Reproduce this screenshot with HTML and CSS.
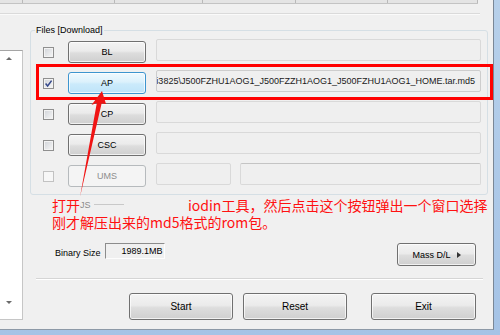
FILE: index.html
```html
<!DOCTYPE html>
<html lang="zh-CN">
<head>
    <meta charset="UTF-8">
    <meta name="viewport" content="width=device-width, initial-scale=1.0">
    <title>Odin3</title>
    <link rel="stylesheet" href="styles.css">
</head>
<body>
    <div class="window">
        <div class="ports">
            <span class="port"></span>
            <span class="port"></span>
            <span class="port"></span>
            <span class="port"></span>
            <span class="port"></span>
            <span class="port"></span>
        </div>
        <div class="rule"></div>

        <div class="main">
            <div class="log">
                <span class="scroll-up"></span>
                <span class="scroll-down"></span>
            </div>

            <div class="content">
                <div class="group">
                    <div class="group-label">Files [Download]</div>
                    <div class="rows">
                        <div class="row">
                            <span class="check"></span>
                            <button class="btn">BL</button>
                            <div class="field"></div>
                        </div>
                        <div class="row">
                            <span class="check">
                                <svg width="9" height="9" viewBox="0 0 9 9"><path d="M1.6 4.6 L3.6 7 L7.6 1.6" fill="none" stroke="#34478a" stroke-width="1.5"/></svg>
                            </span>
                            <button class="btn hot">AP</button>
                            <div class="field path"><span>D:\ROM\J500F_0806_i3825\J500FZHU1AOG1_J500FZZH1AOG1_J500FZHU1AOG1_HOME.tar.md5</span></div>
                        </div>
                        <div class="row">
                            <span class="check"></span>
                            <button class="btn">CP</button>
                            <div class="field"></div>
                        </div>
                        <div class="row">
                            <span class="check"></span>
                            <button class="btn">CSC</button>
                            <div class="field"></div>
                        </div>
                        <div class="row">
                            <span class="check off"></span>
                            <button class="btn" disabled>UMS</button>
                            <div class="field short"></div>
                            <div class="field long"></div>
                        </div>
                    </div>
                </div>

                <div class="status">
                    <span>JS</span>
                    <span class="status-line"></span>
                </div>

                <div class="size-row">
                    <span class="size-label">Binary Size</span>
                    <span class="size-box">1989.1MB</span>
                    <button class="btn mass">Mass D/L<span class="tri"></span></button>
                </div>

                <div class="sep"></div>

                <div class="actions">
                    <button class="btn big">Start</button>
                    <button class="btn big reset">Reset</button>
                    <button class="btn big exit">Exit</button>
                </div>
            </div>
        </div>
    </div>

    <!-- annotation on top of the screenshot -->
    <div class="highlight"></div>
    <svg class="arrow" width="500" height="335" viewBox="0 0 500 335">
        <polygon points="102,91 106,104 101.6,103.6 80,197 96.8,103 91.5,105" fill="#f01414"/>
    </svg>
    <div class="note">
        <div><span class="lead">打开</span>iodin工具，然后点击这个按钮弹出一个窗口选择</div>
        <div>刚才解压出来的md5格式的rom包。</div>
    </div>
</body>
</html>
```

FILE: styles.css
```css
body {
    margin: 0;
    width: 500px;
    height: 335px;
    overflow: hidden;
    position: relative;
    background: linear-gradient(to bottom, #b7d0ea, #a5c3e6);
}

.window {
    width: 493px;
    height: 329px;
    background: #f0f0f0;
    border-right: 1px solid #7a8796;
    border-bottom: 1px solid #8d99a7;
    font: 9px "Liberation Sans", Arial, sans-serif;
    color: #000;
}

.ports {
    display: grid;
    grid-template-columns: 23px 92px 88px 93px 92px 90px;
    width: 478px;
    height: 3px;
    border-bottom: 1px solid #c3c3c3;
}

.port {
    background: #e4e4e4;
    border-right: 1px solid #b9b9b9;
}

.rule {
    margin-top: 9px;
    width: 480px;
    height: 1px;
    background: #dadada;
    border-bottom: 1px solid #fafafa;
}

.main {
    display: flex;
    align-items: flex-start;
}

.log {
    box-sizing: border-box;
    width: 23px;
    height: 270px;
    margin-top: 35px;
    padding: 6px 0 15px 6px;
    background: #fff;
    border-top: 1px solid #a5a5a5;
    border-right: 1px solid #c6c6c6;
    border-bottom: 1px solid #c6c6c6;
    display: flex;
    flex-direction: column;
    justify-content: space-between;
}

.scroll-up,
.scroll-down {
    width: 0;
    height: 0;
    border-left: 3px solid transparent;
    border-right: 3px solid transparent;
}

.scroll-up {
    border-bottom: 3px solid #6b6b6b;
}

.scroll-down {
    border-top: 3px solid #6b6b6b;
}

.content {
    width: 458px;
    margin-left: 7px;
}

.group {
    margin-top: 15px;
    border: 1px solid #d5dfe5;
    border-radius: 3px;
}

.group-label {
    width: fit-content;
    margin: -6px 0 0 4px;
    padding: 0 1px;
    line-height: 11px;
    background: #f0f0f0;
}

.rows {
    padding-top: 3px;
}

.row {
    display: flex;
    align-items: flex-start;
    height: 31px;
}

.check {
    box-sizing: border-box;
    width: 11px;
    height: 11px;
    margin: 8px 0 0 12px;
    border: 1px solid #8f8f8f;
    background: linear-gradient(135deg, #d0d3d8, #f7f7f7);
    box-shadow: inset 0 0 0 1px #f3f3f3;
}

.check svg {
    display: block;
}

.check.off {
    border-color: #c2c2c2;
    background: #f7f7f7;
    box-shadow: none;
}

.btn {
    box-sizing: border-box;
    padding: 0;
    font: inherit;
    color: #000;
    border: 1px solid #707070;
    border-radius: 3px;
    background: linear-gradient(#f3f3f3, #ebebeb 45%, #dddddd 55%, #cfcfcf);
    box-shadow: inset 0 0 0 1px rgba(255, 255, 255, 0.7);
}

.row .btn {
    width: 78px;
    height: 22px;
    margin: 2px 0 0 14px;
}

.btn.hot {
    border-color: #3d95cf;
    background: linear-gradient(#eff9fe, #dcf1fc 45%, #cbeafb 55%, #bfe4f9);
}

.btn:disabled {
    border-color: #b6babd;
    background: #f4f4f4;
    color: #8d8d8d;
    box-shadow: none;
}

.field {
    box-sizing: border-box;
    width: 325px;
    height: 22px;
    margin-left: 10px;
    border: 1px solid #d9d9d9;
    border-radius: 2px;
    background: #efefef;
}

.field.path {
    display: flex;
    justify-content: flex-end;
    align-items: center;
    overflow: hidden;
    white-space: nowrap;
    padding-right: 5px;
    border-color: #cdcdcd;
    color: #1a1a1a;
}

.field.short {
    width: 75px;
}

.field.long {
    width: 241px;
    margin-left: 9px;
    border-top-color: #c4c4c4;
}

.status {
    display: flex;
    align-items: center;
    height: 11px;
    margin-top: 4px;
    padding-left: 50px;
    color: #8a8a8a;
}

.status-line {
    width: 30px;
    height: 1px;
    margin-left: 3px;
    background: #c9c9c9;
}

.size-row {
    display: flex;
    align-items: flex-start;
    height: 23px;
    margin-top: 33px;
}

.size-label {
    margin: 5px 0 0 25px;
    line-height: 11px;
}

.size-box {
    box-sizing: border-box;
    width: 60px;
    height: 16px;
    margin-left: 4px;
    padding-right: 1px;
    border: 1px solid;
    border-color: #8c8c8c #fdfdfd #fdfdfd #8c8c8c;
    line-height: 14px;
    text-align: right;
}

.btn.mass {
    width: 79px;
    height: 23px;
    margin: 0 12px 0 auto;
    display: flex;
    align-items: center;
    justify-content: center;
}

.tri {
    width: 0;
    height: 0;
    margin-left: 6px;
    border-top: 3px solid transparent;
    border-bottom: 3px solid transparent;
    border-left: 4px solid #333;
}

.sep {
    width: 447px;
    height: 1px;
    margin: 12px 0 0 6px;
    background: #d5d5d5;
    border-bottom: 1px solid #fff;
}

.actions {
    display: flex;
    margin-top: 13px;
    padding-left: 99px;
}

.btn.big {
    width: 104px;
    height: 27px;
    font-size: 10px;
}

.btn.reset {
    margin-left: 10px;
}

.btn.exit {
    width: 105px;
    margin-left: 24px;
}

.highlight {
    position: absolute;
    left: 36px;
    top: 64px;
    width: 457px;
    height: 36px;
    box-sizing: border-box;
    border: 3px solid #ff0000;
}

.arrow {
    position: absolute;
    left: 0;
    top: 0;
    pointer-events: none;
}

.note {
    position: absolute;
    left: 52px;
    top: 197px;
    font: 14px/17px "Noto Sans CJK SC", sans-serif;
    color: #ff1111;
    white-space: nowrap;
}

.note .lead {
    margin-right: 108px;
}
```
